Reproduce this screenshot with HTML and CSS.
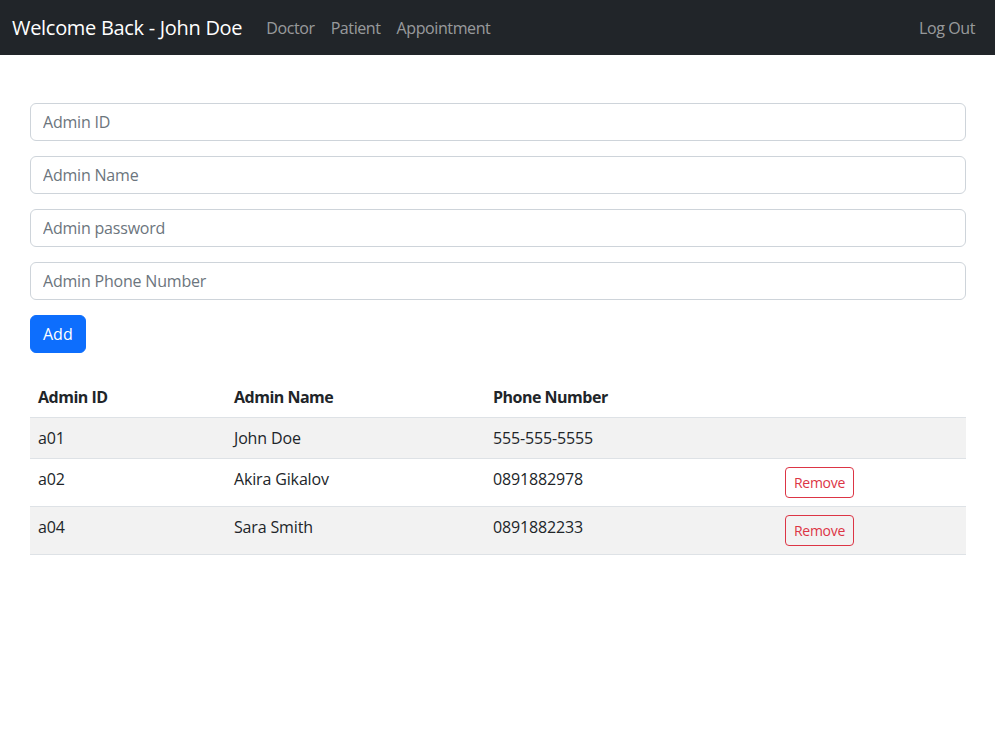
FILE: index.html
```html
<!DOCTYPE html>
<html lang="en">
<head>
<meta charset="utf-8">
<title>Admin</title>
<link rel="stylesheet" href="styles.css">
</head>
<body>
<nav class="navbar">
  <span class="brand">Welcome Back - John Doe</span>
  <ul class="nav-links">
    <li><a href="#" class="nav-link">Doctor</a></li>
    <li><a href="#" class="nav-link">Patient</a></li>
    <li><a href="#" class="nav-link">Appointment</a></li>
  </ul>
  <a href="#" class="nav-link logout">Log Out</a>
</nav>
<main class="content">
  <form class="admin-form">
    <input class="form-control" type="text" placeholder="Admin ID">
    <input class="form-control" type="text" placeholder="Admin Name">
    <input class="form-control" type="password" placeholder="Admin password">
    <input class="form-control" type="text" placeholder="Admin Phone Number">
    <div><button type="button" class="btn-primary">Add</button></div>
  </form>
  <table class="table">
    <thead>
      <tr>
        <th class="c1">Admin ID</th>
        <th class="c2">Admin Name</th>
        <th class="c3">Phone Number</th>
        <th class="c4"></th>
      </tr>
    </thead>
    <tbody>
      <tr class="odd">
        <td>a01</td>
        <td>John Doe</td>
        <td>555-555-5555</td>
        <td></td>
      </tr>
      <tr>
        <td>a02</td>
        <td>Akira Gikalov</td>
        <td>0891882978</td>
        <td><button type="button" class="btn-remove">Remove</button></td>
      </tr>
      <tr class="odd">
        <td>a04</td>
        <td>Sara Smith</td>
        <td>0891882233</td>
        <td><button type="button" class="btn-remove">Remove</button></td>
      </tr>
    </tbody>
  </table>
</main>
</body>
</html>
```
FILE: styles.css
```css
* { box-sizing: border-box; }
body {
  margin: 0;
  font-family: "Open Sans", "Noto Sans", sans-serif;
  font-size: 16px;
  line-height: 1.5;
  color: #212529;
  background: #fff;
}
.navbar {
  display: flex;
  align-items: center;
  height: 55px;
  padding: 0 12px;
  background: #212529;
}
.brand {
  color: #fff;
  font-size: 20px;
  letter-spacing: -0.3px;
  margin-right: 16px;
  padding: 5px 0;
}
.nav-links {
  display: flex;
  list-style: none;
  margin: 0;
  padding: 0;
  flex: 1;
}
.nav-link {
  display: block;
  padding: 8px;
  color: rgba(255,255,255,.55);
  text-decoration: none;
  letter-spacing: -0.4px;
}
.content {
  padding: 48px 29px 0 30px;
}
.admin-form {
  display: flex;
  flex-direction: column;
  gap: 15px;
}
.form-control {
  display: block;
  width: 100%;
  height: 38px;
  padding: 6px 12px;
  font: inherit;
  letter-spacing: -0.2px;
  color: #212529;
  border: 1px solid #ced4da;
  border-radius: 6px;
  background: #fff;
}
.form-control::placeholder { color: #6c757d; }
.btn-primary {
  font: inherit;
  height: 38px;
  padding: 6px 12px;
  color: #fff;
  background: #0d6efd;
  border: 1px solid #0d6efd;
  border-radius: 6px;
}
.table {
  width: 100%;
  margin-top: 24px;
  border-collapse: collapse;
}
.table th, .table td {
  padding: 8px;
  text-align: left;
  vertical-align: top;
  border-bottom: 1px solid #dee2e6;
}
.table th { font-weight: 700; letter-spacing: -0.5px; }
.table td { letter-spacing: -0.15px; }
.c1 { width: 196px; }
.c2 { width: 259px; }
.c3 { width: 292px; }
.odd td { background: #f2f2f2; }
.btn-remove {
  font: inherit;
  font-size: 14px;
  line-height: 1.5;
  letter-spacing: -0.3px;
  padding: 4px 8px;
  color: #dc3545;
  background: transparent;
  border: 1px solid #dc3545;
  border-radius: 4px;
}
```
